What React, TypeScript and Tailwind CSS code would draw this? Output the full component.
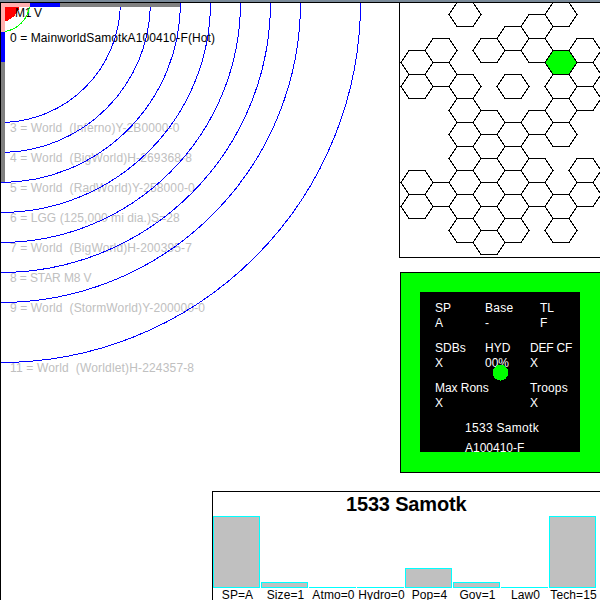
import React from "react";

const ORBITS = [120, 150, 180, 210, 240, 270, 300, 360];

const BODIES = [
  { text: "0 = MainworldSamotkA100410-F(Hot)", tone: "text-black tracking-[0.1px]" },
  { text: "", tone: "" },
  { text: "", tone: "" },
  { text: "3 = World  (Inferno)Y-2B0000-0", tone: "text-[#c0c0c0] tracking-[0.1px]" },
  { text: "4 = World  (BigWorld)H-269368-8", tone: "text-[#c0c0c0] tracking-[0.13px]" },
  { text: "5 = World  (RadWorld)Y-258000-0", tone: "text-[#c0c0c0] tracking-[0.13px]" },
  { text: "6 = LGG (125,000 mi dia.)S=28", tone: "text-[#c0c0c0] tracking-[0.08px]" },
  { text: "7 = World  (BigWorld)H-200395-7", tone: "text-[#c0c0c0] tracking-[0.13px]" },
  { text: "8 = STAR M8 V", tone: "text-[#c0c0c0] tracking-[-0.1px]" },
  { text: "9 = World  (StormWorld)Y-200000-0", tone: "text-[#c0c0c0] tracking-[0.13px]" },
  { text: "", tone: "" },
  { text: "11 = World  (Worldlet)H-224357-8", tone: "text-[#c0c0c0] tracking-[0.16px]" },
];

// Hex centres, column by column, in window coordinates.
const HEXES: [number, number[]][] = [
  [417, [62, 86, 182, 206]],
  [441, [50, 74, 194]],
  [465, [14, 86, 110, 134, 158, 182, 206, 230]],
  [489, [50, 122, 146, 170, 194, 218, 242]],
  [513, [38, 86, 134, 158, 182, 206, 230]],
  [537, [26, 50, 122, 170, 194]],
  [561, [14, 86, 110, 134, 206, 230, 62]],
  [585, [50, 74, 98, 170, 194]],
];

const BARS = [
  { label: "SP=A", h: "h-[72px]" },
  { label: "Size=1", h: "h-[6px]" },
  { label: "Atmo=0", h: "h-px" },
  { label: "Hydro=0", h: "h-px" },
  { label: "Pop=4", h: "h-[20px]" },
  { label: "Gov=1", h: "h-[6px]" },
  { label: "Law0", h: "h-px" },
  { label: "Tech=15", h: "h-[72px]" },
];

function SystemMap() {
  return (
    <section className="relative h-[598px] w-[399px] shrink-0 border-l border-t border-black">
      <svg className="absolute left-0 top-0" width="398" height="597" viewBox="1 3 398 597" shapeRendering="crispEdges">
        <path d="M0 2H20A20 20 0 0 1 0 22Z" fill="#f00" />
        <path d="M1 3H30V7H5V32H1Z" fill="#ffafaf" />
        <path d="M30 3H60V7H30ZM1 32H5V62H1Z" fill="#00f" />
        <path d="M60 3H180V7H60ZM1 62H5V182H1Z" fill="#808080" />
      </svg>
      <div className="relative pl-[14px] pt-[3px] leading-[14px] tracking-[-0.3px]">M1 V</div>
      <ul className="pl-[9px] pt-[11px]">
        {BODIES.map((b, i) => (
          <li key={i} className={"h-[30px] whitespace-pre leading-[14px] " + b.tone}>
            {b.text}
          </li>
        ))}
      </ul>
      <svg className="absolute left-0 top-0" width="398" height="597" viewBox="1 3 398 597" shapeRendering="crispEdges" fill="none">
        <path d="M29.5 7A29.5 29.5 0 0 1 5 31.5" stroke="#0f0" />
        {ORBITS.map((r) => (
          <path
            key={r}
            d={
              r < 180
                ? `M${r + 0.3} 7A${r} ${r} 0 0 1 5 ${r + 2.4}`
                : `M${r + 0.5} 2.5A${r} ${r} 0 0 1 0.5 ${r + 2.5}`
            }
            stroke="#00f"
          />
        ))}
      </svg>
    </section>
  );
}

function SectorMap() {
  return (
    <section className="h-[256px] border-y border-l border-black">
      <svg className="block" width="200" height="254" viewBox="400 3 200 254" shapeRendering="crispEdges">
        {HEXES.map(([x, ys]) =>
          ys.map((y) => (
            <polygon
              key={x + "-" + y}
              points={`${x - 16},${y + 0.5} ${x - 8},${y - 11.5} ${x + 8},${y - 11.5} ${x + 16},${y + 0.5} ${x + 8},${y + 12.5} ${x - 8},${y + 12.5}`}
              fill={x === 561 && y === 62 ? "#0f0" : "none"}
              stroke="#000"
            />
          )),
        )}
      </svg>
    </section>
  );
}

function Field({ name, value, className }: { name: string; value?: string; className: string }) {
  return (
    <div className={"whitespace-nowrap leading-[15px] " + className}>
      <div>{name}</div>
      <div>{value}</div>
    </div>
  );
}

function DefencePanel() {
  return (
    <section className="ml-px mt-[14px] h-[201px] border-y border-l border-black bg-[#00ff00] pl-[19px] pt-[19px]">
      <div className="relative h-[160px] w-[160px] overflow-hidden bg-black pl-[15px] pt-[9px] text-white">
        <div className="flex h-[40px]">
          <Field name="SP" value="A" className="w-[50px]" />
          <Field name="Base" value="-" className="w-[55px] tracking-[0.3px]" />
          <Field name="TL" value="F" className="" />
        </div>
        <div className="flex h-[40px]">
          <Field name="SDBs" value="X" className="w-[50px]" />
          <Field name="HYD" value="00%" className="w-[45px]" />
          <Field name="DEF CF" value="X" className="tracking-[-0.2px]" />
        </div>
        <div className="flex h-[40px]">
          <Field name="Max Rons" value="X" className="w-[95px] tracking-[-0.05px]" />
          <Field name="Troops" value="X" className="tracking-[0.15px]" />
        </div>
        <div className="pl-[30px] leading-[15px] tracking-[0.3px]">1533 Samotk</div>
        <div className="pl-[30px] pt-[5px] leading-[15px]">A100410-F</div>
        <svg className="absolute left-[72px] top-[72px]" width="17" height="17" shapeRendering="crispEdges">
          <circle cx="8.5" cy="8.7" r="7.8" fill="#0f0" />
        </svg>
      </div>
    </section>
  );
}

function ProfileChart() {
  return (
    <section className="absolute left-[212px] top-[491px] h-[109px] w-[388px] overflow-hidden border-l border-t border-black bg-white">
      <h1 className="h-[24px] pl-[133px] text-[20px] font-bold leading-[25px] tracking-[-0.17px]">1533 Samotk</h1>
      <div className="flex h-[72px] items-end gap-px">
        {BARS.map((b) => (
          <div
            key={b.label}
            className={"w-[47px] shrink-0 border-x border-t border-[#00ffff] bg-[#c0c0c0] " + b.h + (b.h === "h-px" ? "" : " border-b")}
          />
        ))}
      </div>
      <div className="flex gap-px pl-px">
        {BARS.map((b) => (
          <div key={b.label} className="flex w-[47px] shrink-0 justify-center whitespace-nowrap leading-[15px] tracking-[0.1px]">
            {b.label}
          </div>
        ))}
      </div>
    </section>
  );
}

export default function App() {
  return (
    <main className="relative h-[600px] w-[600px] overflow-hidden bg-white font-['Liberation_Sans',Arial,sans-serif] text-[12px] text-black">
      <div className="h-[2px] bg-[#7a8a99]" />
      <div className="flex">
        <SystemMap />
        <div className="w-[201px] shrink-0">
          <SectorMap />
          <DefencePanel />
        </div>
      </div>
      <ProfileChart />
    </main>
  );
}
